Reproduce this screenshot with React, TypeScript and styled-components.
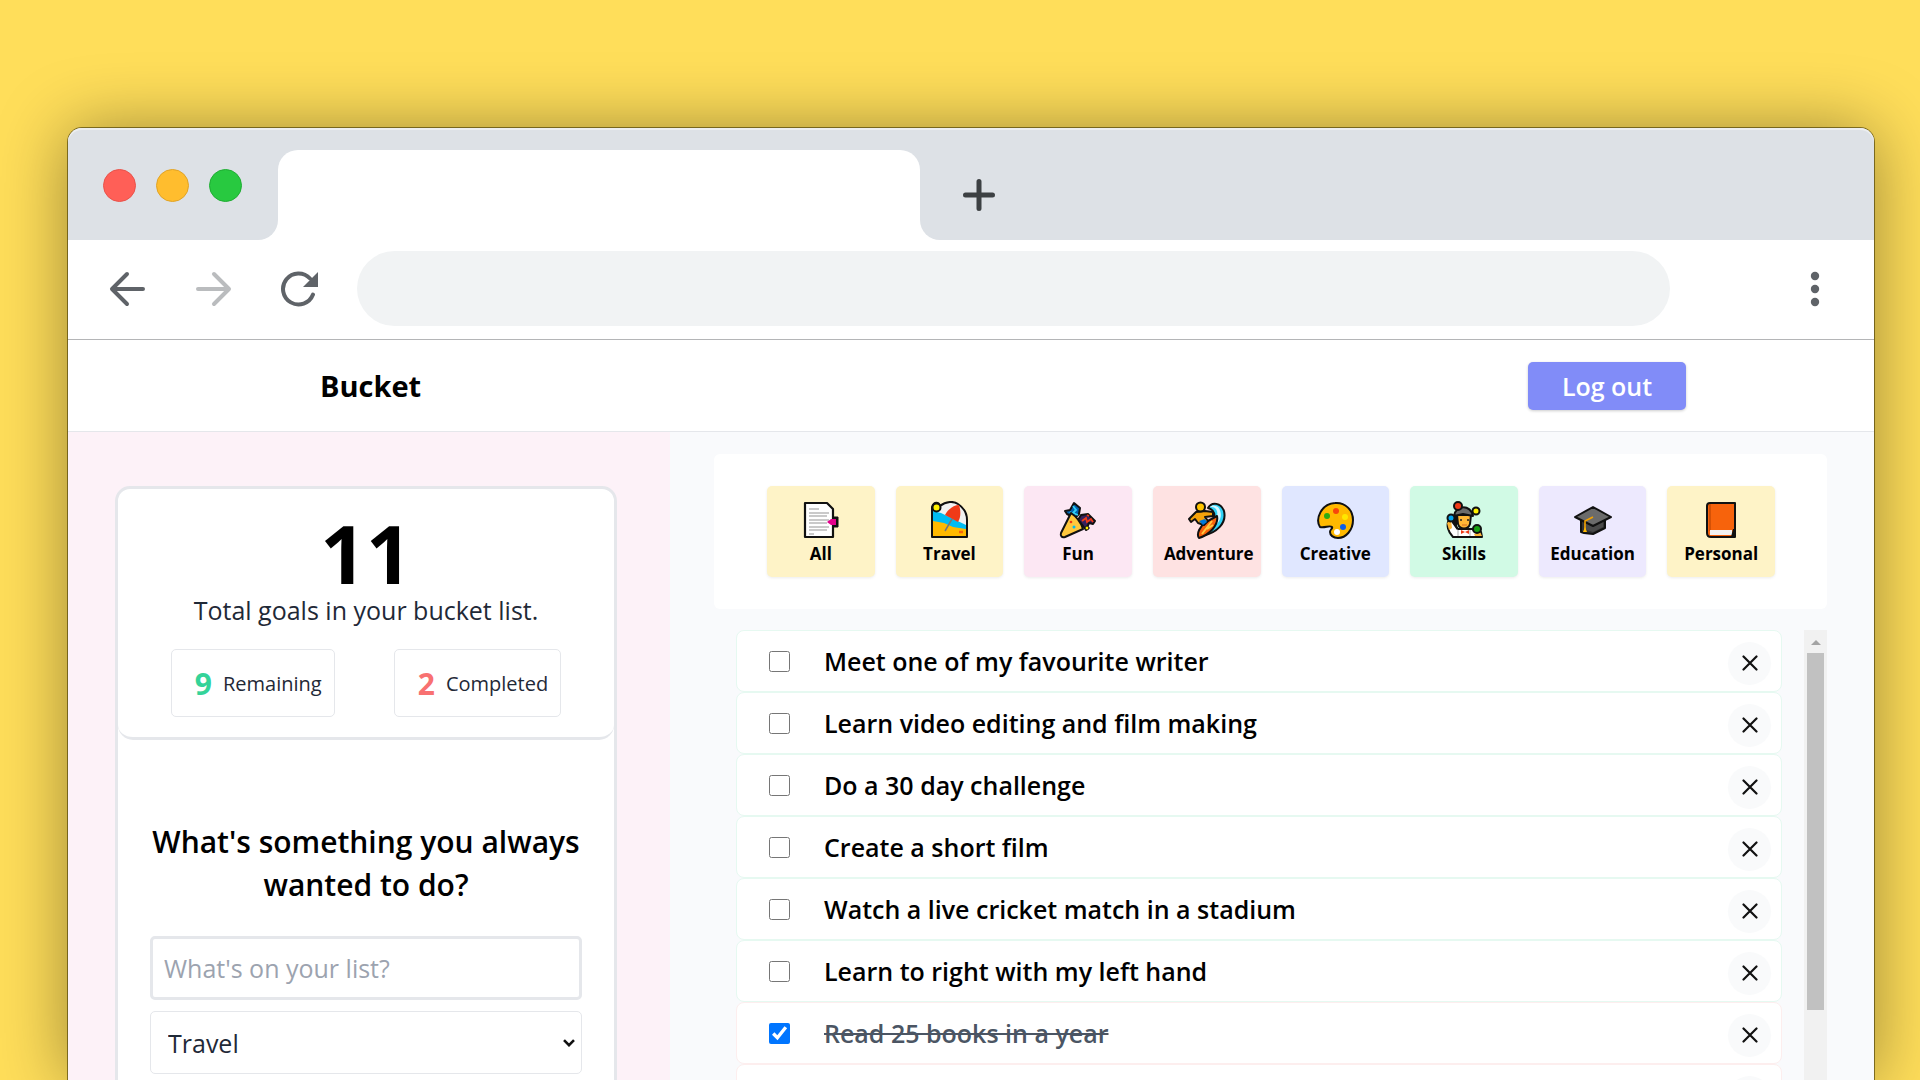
import React, { useState } from "react";
import styled, { createGlobalStyle } from "styled-components";

const GlobalStyle = createGlobalStyle`
  *, *::before, *::after { box-sizing: border-box; }
  body { margin: 0; background: #ffde5a; }
  body, button, input, select { font-family: "Segoe UI", "Open Sans", "Noto Sans", sans-serif; }
  h1, h2, p, ul { margin: 0; padding: 0; }
`;

const Desktop = styled.div`
  display: flex;
  height: 100vh;
  padding: 128px 46px 0 68px;
  overflow: hidden;
  background: #ffde5a;
`;

const BrowserWindow = styled.div`
  flex: 1;
  min-width: 0;
  display: flex;
  flex-direction: column;
  border-radius: 14px 14px 0 0;
  background: #fff;
  box-shadow: 0 0 0 1px rgba(60, 50, 0, 0.6), 0 2px 70px rgba(0, 0, 0, 0.4);
`;

const TabStrip = styled.div`
  flex: none;
  display: grid;
  grid-template-columns: 210px 642px 1fr;
  height: 112px;
  padding-top: 22px;
  border-radius: 14px 14px 0 0;
  background: linear-gradient(#dde1e6, #dde1e6) 0 0 / 100% 92px no-repeat, #fff;
  box-shadow: inset 0 2px 0 #eceef0;
`;

const StripEnd = styled.div<{ $side: "left" | "right" }>`
  display: flex;
  align-items: center;
  background: #dde1e6;
  border-radius: ${(p) => (p.$side === "left" ? "0 0 20px 0" : "0 0 0 20px")};
`;

const Lights = styled.div`
  display: flex;
  gap: 20px;
  padding: 0 0 20px 35px;
`;

const Light = styled.span<{ $color: string; $edge: string }>`
  width: 33px;
  height: 33px;
  border-radius: 50%;
  border: 1px solid ${(p) => p.$edge};
  background: ${(p) => p.$color};
`;

const ActiveTab = styled.div`
  border-radius: 20px 20px 0 0;
  background: #fff;
`;

const IconButton = styled.button`
  display: flex;
  padding: 0;
  border: 0;
  background: none;
`;

const NewTab = styled(IconButton)`
  margin-left: 43px;
`;

const Toolbar = styled.div`
  flex: none;
  display: flex;
  align-items: center;
  height: 100px;
  padding: 0 50px 2px 41px;
  border-bottom: 1px solid #b4b5b7;
`;

const NavButtons = styled.div`
  display: flex;
  gap: 47px;
  margin-right: 38px;
`;

const Address = styled.input`
  flex: 1;
  min-width: 0;
  height: 75px;
  margin-right: 136px;
  padding: 0 38px;
  border: 0;
  border-radius: 38px;
  background: #f1f3f4;
  font-size: 25px;
`;

const Header = styled.header`
  flex: none;
  display: flex;
  align-items: center;
  justify-content: space-between;
  height: 92px;
  padding: 0 188px 0 252px;
  border-bottom: 1px solid #e5e7eb;
`;

const Brand = styled.h1`
  font-size: 29px;
  line-height: 44px;
  font-weight: 700;
  color: #000;
`;

const LogOut = styled.button`
  width: 158px;
  height: 48px;
  padding: 0;
  border: 0;
  border-radius: 5px;
  background: #818cf8;
  box-shadow: 0 1px 3px rgba(0, 0, 0, 0.2);
  color: #fff;
  font-size: 25px;
  font-weight: 600;
`;

const Body = styled.div`
  flex: 1;
  min-height: 0;
  display: grid;
  grid-template-columns: 1fr 2fr;
`;

const Sidebar = styled.aside`
  min-width: 0;
  padding: 54px 53px 0 47px;
  overflow: hidden;
  background: #fdf2f8;
`;

const SideCard = styled.div`
  border: 3px solid #e5e7eb;
  border-radius: 15px;
  background: #fff;
`;

const Summary = styled.section`
  padding: 24px 0 20px;
  border-bottom: 3px solid #e5e7eb;
  border-radius: 15px;
  text-align: center;
`;

const Total = styled.p`
  font-size: 80px;
  line-height: 80px;
  font-weight: 700;
  color: #000;
`;

const TotalLabel = styled.p`
  font-size: 25px;
  line-height: 35px;
  color: #1f2937;
`;

const Stats = styled.div`
  display: flex;
  justify-content: center;
  gap: 59px;
  margin-top: 21px;
`;

const Stat = styled.p`
  display: flex;
  align-items: center;
  height: 68px;
  padding: 0 12px 0 23px;
  gap: 11px;
  border: 1px solid #e5e7eb;
  border-radius: 5px;
  font-size: 20px;
  color: #1f2937;
`;

const StatValue = styled.span<{ $color: string }>`
  font-size: 30px;
  font-weight: 700;
  color: ${(p) => p.$color};
`;

const GoalForm = styled.form`
  display: flex;
  flex-direction: column;
  padding: 80px 32px;
`;

const Question = styled.h2`
  margin: 0 -12px 30px;
  font-size: 30px;
  line-height: 43px;
  font-weight: 600;
  text-align: center;
  color: #000;
`;

const GoalInput = styled.input`
  height: 64px;
  padding: 0 11px;
  border: 3px solid #e5e7eb;
  border-radius: 5px;
  background: #fff;
  font-size: 25px;
  &::placeholder { color: #9ca3af; }
`;

const SelectBox = styled.div`
  display: grid;
  align-items: center;
  margin-top: 11px;
  > * { grid-area: 1 / 1; }
  > svg {
    justify-self: end;
    margin-right: 7px;
    pointer-events: none;
  }
`;

const CategorySelect = styled.select`
  appearance: none;
  width: 100%;
  height: 63px;
  padding: 0 17px;
  border: 1px solid #e5e7eb;
  border-radius: 5px;
  background: #fff;
  font-size: 25px;
  color: #1f2937;
`;

const Main = styled.main`
  min-width: 0;
  min-height: 0;
  display: flex;
  flex-direction: column;
  gap: 21px;
  padding: 22px 47px 0 44px;
  background: #f9fafc;
`;

const Filters = styled.nav`
  flex: none;
  display: grid;
  grid-template-columns: repeat(8, minmax(0, 1fr));
  gap: 21px;
  padding: 32px 52px 32px 53px;
  border-radius: 6px;
  background: #fff;
`;

const Filter = styled.button<{ $bg: string }>`
  display: flex;
  flex-direction: column;
  align-items: stretch;
  height: 91px;
  padding: 15px 11px 0;
  border: 0;
  border-radius: 5px;
  background: ${(p) => p.$bg};
  box-shadow: 0 1px 3px rgba(0, 0, 0, 0.08);
  color: #000;
  font-size: 17px;
  line-height: 30px;
  font-weight: 700;
  > svg { align-self: center; }
`;

const FilterLabel = styled.span`
  white-space: nowrap;
`;

const ListArea = styled.div`
  flex: 1;
  min-height: 0;
  display: flex;
`;

const Goals = styled.ul`
  flex: 1;
  min-width: 0;
  padding: 0 22px;
  overflow: hidden;
  list-style: none;
`;

const Goal = styled.li<{ $done: boolean }>`
  display: flex;
  align-items: center;
  height: 62px;
  padding: 0 10px 0 32px;
  border: 1px solid ${(p) => (p.$done ? "#fdeeee" : "#e6f9f1")};
  border-radius: 8px;
  background: #fff;
`;

const GoalLabel = styled.label<{ $done: boolean }>`
  flex: 1;
  display: flex;
  align-items: center;
  gap: 34px;
  font-size: 25px;
  line-height: 34px;
  font-weight: 600;
  color: ${(p) => (p.$done ? "#4b5563" : "#000")};
  span { text-decoration: ${(p) => (p.$done ? "line-through" : "none")}; }
`;

const Tick = styled.input`
  width: 21px;
  height: 21px;
  margin: 0;
`;

const Remove = styled.button`
  display: flex;
  align-items: center;
  justify-content: center;
  width: 43px;
  height: 43px;
  margin-top: 4px;
  padding: 0;
  border: 0;
  border-radius: 50%;
  background: #f9fafb;
`;

const ScrollTrack = styled.div`
  flex: none;
  display: flex;
  flex-direction: column;
  align-items: center;
  width: 23px;
  background: #f1f1f1;
`;

const ScrollUp = styled.span`
  flex: none;
  display: flex;
  align-items: center;
  height: 23px;
  padding-top: 2px;
`;

const ScrollThumb = styled.span`
  flex: none;
  width: 17px;
  height: 357px;
  background: #c1c1c1;
`;

const outline = { stroke: "#111", strokeWidth: 2, strokeLinejoin: "round" as const, strokeLinecap: "round" as const };

const Art = ({ children }: { children: React.ReactNode }) => (
  <svg width="38" height="38" viewBox="0 0 38 38" fill="none" aria-hidden="true">{children}</svg>
);

const PageArt = () => (
  <Art>
    <path d="M3 2H25L31 8V36H3Z" fill="#fff" {...outline} strokeWidth="2.200" />
    <path d="M31 16H36V26H31Z" fill="#111" stroke="#111" />
    <path d="M7 8H17M7 12H27M7 15H25M7 19H27M7 22H25M7 26H27M7 29H25M7 33H12" stroke="#b9b9b9" strokeWidth="1.300" />
    <path d="M25 21L29 18H34V24H29Z" fill="#e3008c" />
  </Art>
);

const BeachArt = () => (
  <Art>
    <path d="M2 6C4 0 9 1 10 5C16 0 24 0 28 3C34 7 37 13 37 19V36H2Z" fill="#f2f2f2" {...outline} />
    <path d="M3 10L11 12L36 24V30H3Z" fill="#00bcf2" />
    <path d="M15 14C18 8 24 4 29 4C31 10 31 16 28 21Z" fill="#f03a17" />
    <path d="M3 20L14 22L23 26L36 28V35H3Z" fill="#ffb900" />
    <path d="M22 18L15 30" stroke="#777" strokeWidth="1.500" />
    <circle cx="6.500" cy="6.500" r="4" fill="#fff100" {...outline} />
    <path d="M29 31H33" stroke="#f7630c" strokeWidth="2.500" />
  </Art>
);

const PartyArt = () => (
  <Art>
    <path d="M6 10L11 9L15 2L21 7L20 13L16 17L8 13Z" fill="#0063b1" {...outline} />
    <path d="M14 5L17 9L14 12L19 14M11 11L13 13" stroke="#31d2f7" strokeWidth="1.800" />
    <path d="M19 19L22 14L29 13L36 20L34 23L30 22L27 29L24 25Z" fill="#35205c" {...outline} />
    <path d="M23 20L27 17L28 21L32 18L34 21M28 14L30 15" stroke="#f03a17" strokeWidth="1.800" />
    <circle cx="28" cy="27" r="2" fill="#fff100" {...outline} strokeWidth="1" />
    <path d="M12 12C18 16 22 22 24 28L6 36C3 37 1 35 2 32Z" fill="#ffc83d" {...outline} />
    <circle cx="12" cy="21" r="1.300" fill="#f03a17" /><circle cx="15" cy="26" r="1.500" fill="#00bcf2" />
  </Art>
);

const SurfArt = () => (
  <Art>
    <path d="M20 7C24 0 33 2 36 10C39 22 29 32 14 35L24 20C28 15 27 9 20 7Z" fill="#31d2f7" {...outline} />
    <path d="M22 6C29 5 31 12 28 19L22 28C34 22 35 12 30 6C27 4 24 4 22 6Z" fill="#d7f5ff" />
    <path d="M29 15C31 24 21 34 11 37C8 33 12 25 18 21Z" fill="#f7630c" {...outline} />
    <path d="M14 33L24 20M19 28L25 24" stroke="#ffc83d" strokeWidth="2" />
    <path d="M8 11L17 10L25 11V15L17 16L20 20L16 24L10 22L7 18L3 21L1 18Z" fill="#f7a30c" {...outline} />
    <path d="M11 20L17 18L19 21L15 24Z" fill="#0078d7" />
    <circle cx="12.500" cy="6" r="4.500" fill="#ffc400" {...outline} />
  </Art>
);

const PaletteArt = () => (
  <Art>
    <path d="M19 2C29 1 37 9 37 19C37 29 30 37 22 37C17 37 14 34 14 31C14 28 17 28 16 26C14 24 9 27 4 26C-1 18 5 3 19 2Z" fill="#ffb900" {...outline} />
    <circle cx="20" cy="10" r="3" fill="#f7460c" /><circle cx="11" cy="15" r="3" fill="#2dac12" />
    <circle cx="29" cy="16" r="3" fill="#ffe600" /><circle cx="27" cy="26" r="3" fill="#0f5de8" />
    <circle cx="21" cy="31" r="3" fill="#fff" />
  </Art>
);

const JugglerArt = () => (
  <Art>
    <path d="M4 19C1 24 3 31 8 36H37L36 31L27 28H13L7 19Z" fill="#fff" {...outline} />
    <path d="M7 17L12 13V29L7 22Z" fill="#111" />
    <path d="M2 22L6 19L7 27L4 29ZM29 33L35 31L37 35H30Z" fill="#ffb636" />
    <path d="M12 14H26L25 23C23 29 15 29 13 23Z" fill="#ffb636" {...outline} />
    <path d="M9 15C10 4 26 3 28 15L18 13Z" fill="#6b6b6b" {...outline} />
    <path d="M16 18V20M23 18V20" stroke="#222" strokeWidth="1.500" /><path d="M17 24H22" stroke="#d56b20" />
    <path d="M13 29V35M25 29V35" stroke="#aaa" /><path d="M16 29L20 31L24 29V33L20 31L16 33Z" fill="#f03a17" />
    <circle cx="13" cy="5" r="4" fill="#f03a17" {...outline} /><circle cx="31" cy="10" r="3.500" fill="#fff100" {...outline} />
    <circle cx="6" cy="17" r="3.500" fill="#00a2ed" {...outline} /><circle cx="32" cy="28" r="4" fill="#16a010" {...outline} />
  </Art>
);

const CapArt = () => (
  <Art>
    <path d="M7 19V31L10 32L19 33L31 27V17Z" fill="#333" {...outline} />
    <path d="M10 20L19 25L29 19V26L19 31L10 28Z" fill="#4a4a4a" />
    <path d="M1 16L19 6L37 16L19 25Z" fill="#6b6b6b" {...outline} />
    <path d="M19 16L11 20V30" stroke="#f2a100" strokeWidth="1.600" /><path d="M11 26L13 31H9Z" fill="#ffb900" />
  </Art>
);

const BookArt = () => (
  <Art>
    <path d="M8 2H33V36H9C6 36 5 34 5 32V5C5 3 6 2 8 2Z" fill="#f7630c" {...outline} />
    <path d="M8 3V30" stroke="#c84b05" strokeWidth="1.500" />
    <path d="M8 29H30V34H8Z" fill="#f2f2f2" /><path d="M31 28H33V36H29Z" fill="#111" />
  </Art>
);

const filters = [
  { name: "All", bg: "#fef3c7", art: <PageArt /> },
  { name: "Travel", bg: "#fef3c7", art: <BeachArt /> },
  { name: "Fun", bg: "#fce7f3", art: <PartyArt /> },
  { name: "Adventure", bg: "#fee2e2", art: <SurfArt /> },
  { name: "Creative", bg: "#e0e7ff", art: <PaletteArt /> },
  { name: "Skills", bg: "#d1fae5", art: <JugglerArt /> },
  { name: "Education", bg: "#ede9fe", art: <CapArt /> },
  { name: "Personal", bg: "#fef3c7", art: <BookArt /> },
];

const initialGoals = [
  { text: "Meet one of my favourite writer", done: false },
  { text: "Learn video editing and film making", done: false },
  { text: "Do a 30 day challenge", done: false },
  { text: "Create a short film", done: false },
  { text: "Watch a live cricket match in a stadium", done: false },
  { text: "Learn to right with my left hand", done: false },
  { text: "Read 25 books in a year", done: true },
  { text: "", done: true },
];

export default function App() {
  const [goals, setGoals] = useState(initialGoals);
  const toggle = (index: number) =>
    setGoals(goals.map((g, i) => (i === index ? { ...g, done: !g.done } : g)));

  return (
    <>
      <GlobalStyle />
      <Desktop>
        <BrowserWindow>
          <TabStrip>
            <StripEnd $side="left">
              <Lights>
                <Light $color="#ff5f57" $edge="#e9524a" />
                <Light $color="#ffbd2e" $edge="#e1a325" />
                <Light $color="#28c940" $edge="#1fad33" />
              </Lights>
            </StripEnd>
            <ActiveTab />
            <StripEnd $side="right">
              <NewTab aria-label="New tab">
                <svg width="32" height="32" viewBox="0 0 32 32" stroke="#3c4043" strokeWidth="5" strokeLinecap="round">
                  <path d="M16 2.500V29.500M2.500 16H29.500" />
                </svg>
              </NewTab>
            </StripEnd>
          </TabStrip>
          <Toolbar>
            <NavButtons>
              <IconButton aria-label="Back">
                <svg width="38" height="38" viewBox="0 0 38 38" fill="none" stroke="#5f6368" strokeWidth="4" strokeLinecap="round" strokeLinejoin="round">
                  <path d="M34 19H4M18 4L3 19L18 34" />
                </svg>
              </IconButton>
              <IconButton aria-label="Forward">
                <svg width="38" height="38" viewBox="0 0 38 38" fill="none" stroke="#babcbe" strokeWidth="4" strokeLinecap="round" strokeLinejoin="round">
                  <path d="M4 19H34M20 4L35 19L20 34" />
                </svg>
              </IconButton>
              <IconButton aria-label="Reload">
                <svg width="40" height="38" viewBox="0 0 40 38" fill="none">
                  <path d="M34 24.500A15.500 15.500 0 1 1 31 8.500" stroke="#5f6368" strokeWidth="4" strokeLinecap="round" />
                  <path d="M39 2V17H24Z" fill="#5f6368" />
                </svg>
              </IconButton>
            </NavButtons>
            <Address aria-label="Address" />
            <IconButton aria-label="Browser menu">
              <svg width="18" height="38" viewBox="0 0 18 38" fill="#5f6368">
                <circle cx="9" cy="6" r="4.200" /><circle cx="9" cy="19" r="4.200" /><circle cx="9" cy="32" r="4.200" />
              </svg>
            </IconButton>
          </Toolbar>
          <Header>
            <Brand>Bucket</Brand>
            <LogOut>Log out</LogOut>
          </Header>
          <Body>
            <Sidebar>
              <SideCard>
                <Summary>
                  <Total>11</Total>
                  <TotalLabel>Total goals in your bucket list.</TotalLabel>
                  <Stats>
                    <Stat><StatValue $color="#34d399">9</StatValue>Remaining</Stat>
                    <Stat><StatValue $color="#f87171">2</StatValue>Completed</Stat>
                  </Stats>
                </Summary>
                <GoalForm>
                  <Question>What's something you always wanted to do?</Question>
                  <GoalInput aria-label="Goal" placeholder="What's on your list?" />
                  <SelectBox>
                    <CategorySelect aria-label="Category" defaultValue="Travel">
                      {filters.slice(1).map((f) => <option key={f.name}>{f.name}</option>)}
                    </CategorySelect>
                    <svg width="12" height="8" viewBox="0 0 12 8" fill="none" stroke="#111" strokeWidth="2.600">
                      <path d="M1 1.200L6 6.200L11 1.200" />
                    </svg>
                  </SelectBox>
                </GoalForm>
              </SideCard>
            </Sidebar>
            <Main>
              <Filters aria-label="Categories">
                {filters.map((f) => (
                  <Filter key={f.name} $bg={f.bg}>{f.art}<FilterLabel>{f.name}</FilterLabel></Filter>
                ))}
              </Filters>
              <ListArea>
                <Goals>
                  {goals.map((g, i) => (
                    <Goal key={i} $done={g.done}>
                      <GoalLabel $done={g.done}>
                        <Tick type="checkbox" checked={g.done} onChange={() => toggle(i)} />
                        <span>{g.text}</span>
                      </GoalLabel>
                      <Remove aria-label="Remove goal">
                        <svg width="16" height="16" viewBox="0 0 16 16" stroke="#111" strokeWidth="2.200" strokeLinecap="round">
                          <path d="M1.500 1.500L14.500 14.500M14.500 1.500L1.500 14.500" />
                        </svg>
                      </Remove>
                    </Goal>
                  ))}
                </Goals>
                <ScrollTrack>
                  <ScrollUp>
                    <svg width="10" height="5" viewBox="0 0 10 5"><path d="M0 5L5 0L10 5Z" fill="#a3a3a3" /></svg>
                  </ScrollUp>
                  <ScrollThumb />
                </ScrollTrack>
              </ListArea>
            </Main>
          </Body>
        </BrowserWindow>
      </Desktop>
    </>
  );
}
